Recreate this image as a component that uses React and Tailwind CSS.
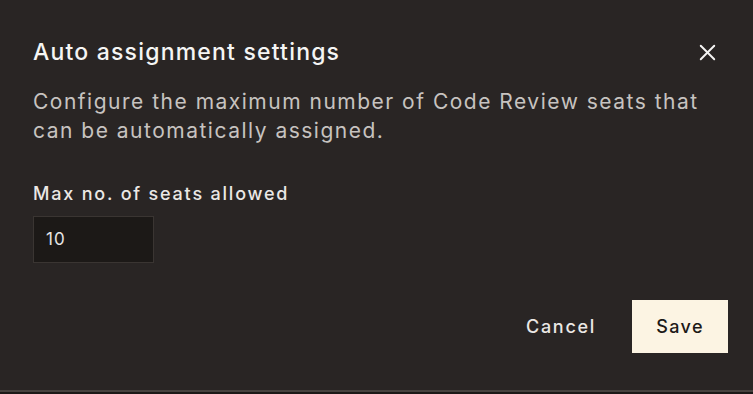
import { X } from 'lucide-react';

export default function App() {
    return (
        <div className="h-[394px] w-[753px] bg-[#1c1917] font-['Inter','Noto_Sans',sans-serif]">
            {/* Dialog panel */}
            <div className="flex h-[392px] flex-col border-b-2 border-[#47423f] bg-[#292524] px-[33px]">
                <div className="mt-[37px] flex items-center justify-between">
                    <h2 className="text-[23px] leading-[30px] font-medium tracking-[1.2px] text-[#f5f5f4]">Auto assignment settings</h2>
                    <button className="mr-[-1px] text-[#f5f5f4]">
                        <X size={27} strokeWidth={1.7} />
                    </button>
                </div>
                <p className="mt-[20px] text-[21px] leading-[29px] tracking-[1.5px] text-[#c7c3c0]">
                    Configure the maximum number of Code Review seats that can be automatically assigned.
                </p>

                <label className="mt-[36px] text-[18px] leading-[26px] font-medium tracking-[1.8px] text-[#ebe8e5]">Max no. of seats allowed</label>
                <div className="mt-[9px] flex h-[47px] w-[121px] items-center border border-[#3a3532] bg-[#1c1917] px-[12px] text-[17px] tracking-[1px] text-[#e7e5e4]">
                    10
                </div>

                <div className="mt-[37px] flex items-center justify-end gap-[36px]">
                    <button className="text-[18px] font-medium tracking-[1.7px] text-[#ebe8e5]">Cancel</button>
                    <button className="mr-[-8px] h-[53px] w-[96px] bg-[#fcf4e3] text-[18px] font-medium tracking-[1.4px] text-[#1c1917]">Save</button>
                </div>
            </div>
        </div>
    );
}
